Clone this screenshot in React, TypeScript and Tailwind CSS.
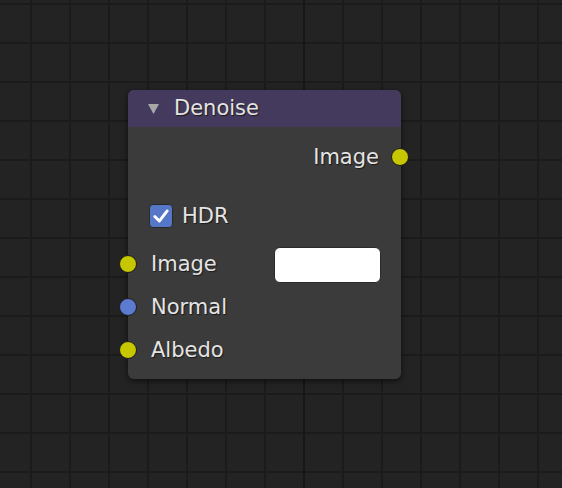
import React from 'react';

const Socket = ({ color, className }: { color: string; className: string }) => (
  <div
    className={`absolute w-[18px] h-[18px] rounded-full border-[1.5px] border-[#1c1c1c] -translate-x-1/2 -translate-y-1/2 ${color} ${className}`}
  />
);

const NodeLabel = ({ children }: { children: React.ReactNode }) => (
  <span className="text-[21px] leading-none text-[#e4e4e4] [text-shadow:1px_1px_1px_#1a1a1a]">{children}</span>
);

export default function App() {
  return (
    <div
      className="relative w-[562px] h-[488px] overflow-hidden bg-[#232323] bg-[linear-gradient(to_right,#1b1b1b_2px,transparent_2px),linear-gradient(to_bottom,#1b1b1b_2px,transparent_2px)] bg-[size:39px_39px] bg-[position:30px_3px]"
      style={{ fontFamily: '"DejaVu Sans", "Liberation Sans", sans-serif' }}
    >
      {/* major grid line */}
      <div className="absolute left-[303px] top-0 bottom-0 w-[2px] bg-[#171717]" />

      {/* Denoise node */}
      <div className="absolute left-[128px] top-[90px] w-[273px] h-[289px]">
        <div className="flex flex-col h-full rounded-[6px] overflow-hidden bg-[#3d3d3d]/95 shadow-[0_2px_6px_rgba(0,0,0,0.6)]">
          {/* header */}
          <div className="h-[37px] flex items-center bg-[#433a5d] pl-[20px] gap-[15px] shrink-0">
            <svg width="11" height="11" viewBox="0 0 11 11">
              <path d="M0 1 L11 1 L5.5 11 Z" fill="#a8a8a8" />
            </svg>
            <NodeLabel>Denoise</NodeLabel>
          </div>

          {/* output */}
          <div className="h-[28px] mt-[16px] flex items-center justify-end pr-[22px]">
            <NodeLabel>Image</NodeLabel>
          </div>

          {/* HDR */}
          <div className="h-[28px] mt-[31px] flex items-center pl-[21px] gap-[9px]">
            <div className="w-[24px] h-[24px] rounded-[4px] bg-[#5677c7] border border-[#2a2a2a] flex items-center justify-center">
              <svg width="18" height="18" viewBox="0 0 16 16">
                <path d="M2.5 8.5 L6.5 12.5 L13.5 3.5" fill="none" stroke="#fff" strokeWidth="2.6" strokeLinecap="round" strokeLinejoin="round" />
              </svg>
            </div>
            <NodeLabel>HDR</NodeLabel>
          </div>

          {/* Image input */}
          <div className="h-[35px] mt-[17px] flex items-center justify-between pl-[23px] pr-[20px]">
            <NodeLabel>Image</NodeLabel>
            <div className="w-[107px] h-[36px] rounded-[6px] bg-white border border-[#2a2a2a]" />
          </div>

          {/* Normal */}
          <div className="h-[28px] mt-[11px] flex items-center pl-[23px]">
            <NodeLabel>Normal</NodeLabel>
          </div>

          {/* Albedo */}
          <div className="h-[28px] mt-[15px] flex items-center pl-[23px]">
            <NodeLabel>Albedo</NodeLabel>
          </div>
        </div>

        <Socket color="bg-[#c7c700]" className="left-[272px] top-[67px]" />
        <Socket color="bg-[#c7c700]" className="left-0 top-[174px]" />
        <Socket color="bg-[#5b7ad0]" className="left-0 top-[217px]" />
        <Socket color="bg-[#c7c700]" className="left-0 top-[260px]" />
      </div>
    </div>
  );
}
